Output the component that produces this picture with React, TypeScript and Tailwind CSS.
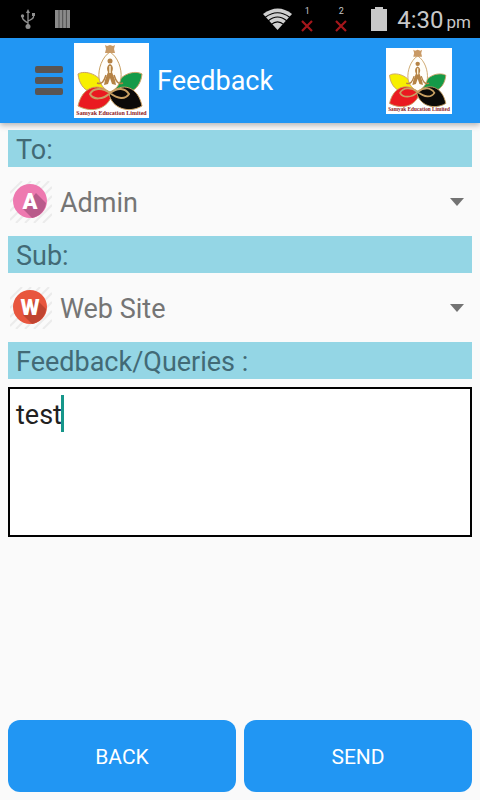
import { useState } from 'react';
import type { ReactNode } from 'react';

// Company logo: sitting figure over four petals
function Logo({ className }: { className: string }) {
  return (
    <svg className={className} viewBox="0 0 75 75" role="img" aria-label="Samyak Education Limited">
      <rect width="75" height="75" fill="#ffffff" />
      <g stroke="#c9a063" strokeWidth="1">
        <path d="M4 31 C10 27 27 30 32 47 C22 53 6 50 4 31Z" fill="#f7ef00" />
        <path d="M68 31 C61 27 45 30 40 47 C50 53 66 50 68 31Z" fill="#159a48" />
        <path d="M4 63 C8 44 24 38 38 51 C35 65 19 71 4 63Z" fill="#ea1a20" />
        <path d="M68 63 C64 44 49 38 35 51 C38 65 54 71 68 63Z" fill="#0c0a09" />
        <path d="M36 9 C44 14 48 26 47 35 C46 42 41 47 36 49 C31 47 26 42 25 35 C24 26 28 14 36 9Z" fill="#fffefa" />
      </g>
      <path d="M31 2 L33 3 L36 2 L39 3 L41 2 L40 6 L41 10 H31 L32 6Z" fill="#c99a66" />
      <circle cx="36" cy="18" r="2.500" fill="#b58345" />
      <path d="M36 21 C32 23 33 27 34 29 L31 37 L30 42 L34 41 L36 35 L38 41 L42 42 L41 37 L38 29 C39 27 40 23 36 21Z" fill="#b58345" />
      <path d="M36 23 V30" stroke="#fff4d9" strokeWidth="1.500" />
      <path d="M23 40 C28 42 30 38 32 32 M49 40 C44 42 42 38 40 32" fill="none" stroke="#b58345" strokeWidth="1.500" />
      <path
        d="M36 50 C28 44 19 45 16 51 C19 57 29 57 36 50 C44 44 51 45 55 51 C51 57 44 56 36 50Z"
        fill="none"
        stroke="#c9a063"
        strokeWidth="2"
      />
      <text x="37.500" y="72" textAnchor="middle" fill="#8e1822" className="font-['Liberation_Serif',serif] text-[6px] font-bold">
        Samyak Education Limited
      </text>
    </svg>
  );
}

function UsbIcon() {
  return (
    <svg className="h-5 w-4" viewBox="0 0 16 20" fill="none" stroke="#8f8f8f" strokeWidth="1.300" aria-hidden="true">
      <path d="M8 3 V17 M2.500 7 V9 Q3 11 8 14 M13.500 5 V8 Q13 10 8 12" />
      <path d="M8 0 L10 4 H6Z" fill="#8f8f8f" stroke="none" />
      <circle cx="8" cy="17.500" r="2.500" fill="#8f8f8f" stroke="none" />
      <circle cx="2.500" cy="7" r="1.700" fill="#8f8f8f" stroke="none" />
      <path d="M12 4 h3 v3 h-3Z" fill="#8f8f8f" stroke="none" />
    </svg>
  );
}

function WifiIcon() {
  return (
    <svg className="h-6 w-[30px]" viewBox="0 0 30 24" aria-hidden="true">
      <path d="M0 7 Q15 -4 29 7 L14.500 23Z" fill="#cfcfcf" />
      <path d="M2 10.500 Q14.500 1 27 10.500 M5 14 Q14.500 6 24 14 M8 17.700 Q14.500 12 21 17.700" fill="none" stroke="#000000" strokeWidth="1.100" />
    </svg>
  );
}

function NoSim({ slot }: { slot: number }) {
  return (
    <div className="flex w-3 flex-col items-center gap-1">
      <span className="text-[9px] leading-[9px] text-[#c8c8c8]">{slot}</span>
      <svg className="h-3 w-3" viewBox="0 0 12 12" stroke="#a5161b" strokeWidth="2.200" aria-hidden="true">
        <path d="M1 1 L11 11 M11 1 L1 11" />
      </svg>
    </div>
  );
}

function StatusBar() {
  return (
    <div className="flex h-[38px] items-center bg-black pr-[9px] pl-5">
      <UsbIcon />
      <svg className="ml-[19px] h-[18px] w-[15px]" viewBox="0 0 15 18" aria-hidden="true">
        <rect width="15" height="18" fill="#8a8a8a" />
        <path d="M4 0 V18 M7.700 0 V18 M11.400 0 V18" stroke="#4e4e4e" strokeWidth="1" />
      </svg>
      <div className="ml-auto flex items-center text-[#c8c8c8]">
        <WifiIcon />
        <div className="ml-2 flex gap-[22px]">
          <NoSim slot={1} />
          <NoSim slot={2} />
        </div>
        <svg className="ml-6 h-6 w-4" viewBox="0 0 16 24" fill="#c8c8c8" aria-hidden="true">
          <path d="M4 0 H12 V2 H16 V24 H0 V2 H4Z" />
        </svg>
        <div className="ml-[10px] flex items-baseline gap-[3px] pt-1">
          <span className="text-[24px] leading-8">4:30</span>
          <span className="text-[17px] leading-8">pm</span>
        </div>
      </div>
    </div>
  );
}

function LetterIcon({ letter, color, shade }: { letter: string; color: string; shade: string }) {
  return (
    <svg className="h-[42px] w-[42px] shrink-0" viewBox="0 0 42 42" aria-hidden="true">
      <path
        d="M0 12 L12 0 M0 21 L21 0 M0 30 L30 0 M0 39 L39 0 M6 42 L42 6 M15 42 L42 15 M24 42 L42 24 M33 42 L42 33"
        stroke="#ebebeb"
        strokeWidth="2"
      />
      <circle cx="20" cy="20" r="17" fill={color} />
      <path d="M26 12 L36 22 A17 17 0 0 1 22 37 L13 28Z" fill={shade} />
      <text x="20" y="28" textAnchor="middle" fill="#ffffff" className="font-[Roboto,sans-serif] text-[22px] font-black">
        {letter}
      </text>
    </svg>
  );
}

function FieldLabel({ htmlFor, children }: { htmlFor: string; children: ReactNode }) {
  return (
    <label htmlFor={htmlFor} className="block h-[37px] bg-[#94d6e5] px-2 text-[27px] leading-[41px] text-[#426a76]">
      {children}
    </label>
  );
}

interface SpinnerProps {
  id: string;
  options: string[];
  color: string;
  shade: string;
}

function Spinner({ id, options, color, shade }: SpinnerProps) {
  const [value, setValue] = useState(options[0]);

  return (
    <div className="relative flex h-[69px] items-center gap-2 pl-[2px]">
      <LetterIcon letter={value[0]} color={color} shade={shade} />
      <select
        id={id}
        value={value}
        onChange={(e) => setValue(e.target.value)}
        className="h-12 min-w-0 flex-1 appearance-none bg-transparent pt-[3px] text-[27px] text-[#757575] outline-none"
      >
        {options.map((option) => (
          <option key={option}>{option}</option>
        ))}
      </select>
      <svg className="pointer-events-none absolute right-2 h-2 w-[14px]" viewBox="0 0 14 8" aria-hidden="true">
        <path d="M0 0 H14 L7 8Z" fill="#737373" />
      </svg>
    </div>
  );
}

export default function App() {
  const [message, setMessage] = useState('test');

  return (
    <div className="flex min-h-screen flex-col bg-[#fafafa] font-[Roboto,sans-serif]">
      <StatusBar />

      <header className="flex h-[85px] items-center bg-[#2196f3] pr-7 pl-[35px] shadow-[0_2px_6px_rgba(0,0,0,0.3)]">
        <button type="button" aria-label="Menu" className="flex w-7 flex-col gap-1">
          <span className="h-[7px] w-full rounded-xs bg-[#595452]" />
          <span className="h-[7px] w-full rounded-xs bg-[#595452]" />
          <span className="h-[7px] w-full rounded-xs bg-[#595452]" />
        </button>
        <Logo className="ml-[11px] h-[75px] w-[75px]" />
        <h1 className="ml-2 text-[27px] leading-8 text-white">Feedback</h1>
        <Logo className="ml-auto h-[66px] w-[66px]" />
      </header>

      <form className="flex flex-1 flex-col px-2 pt-[7px] pb-2" onSubmit={(e) => e.preventDefault()}>
        <FieldLabel htmlFor="to">To:</FieldLabel>
        <Spinner id="to" options={['Admin']} color="#ee79b0" shade="#b95b8b" />
        <FieldLabel htmlFor="subject">Sub:</FieldLabel>
        <Spinner id="subject" options={['Web Site']} color="#e8563e" shade="#c04431" />
        <FieldLabel htmlFor="message">Feedback/Queries :</FieldLabel>

        <div className="relative mt-2">
          <textarea
            id="message"
            value={message}
            onChange={(e) => setMessage(e.target.value)}
            className="block h-[150px] w-full resize-none border-2 border-black bg-white px-[6px] py-2 text-[27px] leading-9 text-[#212121] caret-[#009688] outline-none"
          />
          {message === 'test' && (
            <span className="pointer-events-none absolute top-2 left-[53px] h-[37px] w-[3px] bg-[#16968a]" />
          )}
        </div>

        <div className="mt-auto grid grid-cols-2 gap-2 pt-4">
          <button type="button" className="h-[72px] rounded-xl bg-[#2196f3] pt-[3px] text-[21px] text-white">
            BACK
          </button>
          <button type="submit" className="h-[72px] rounded-xl bg-[#2196f3] pt-[3px] text-[21px] text-white">
            SEND
          </button>
        </div>
      </form>
    </div>
  );
}
